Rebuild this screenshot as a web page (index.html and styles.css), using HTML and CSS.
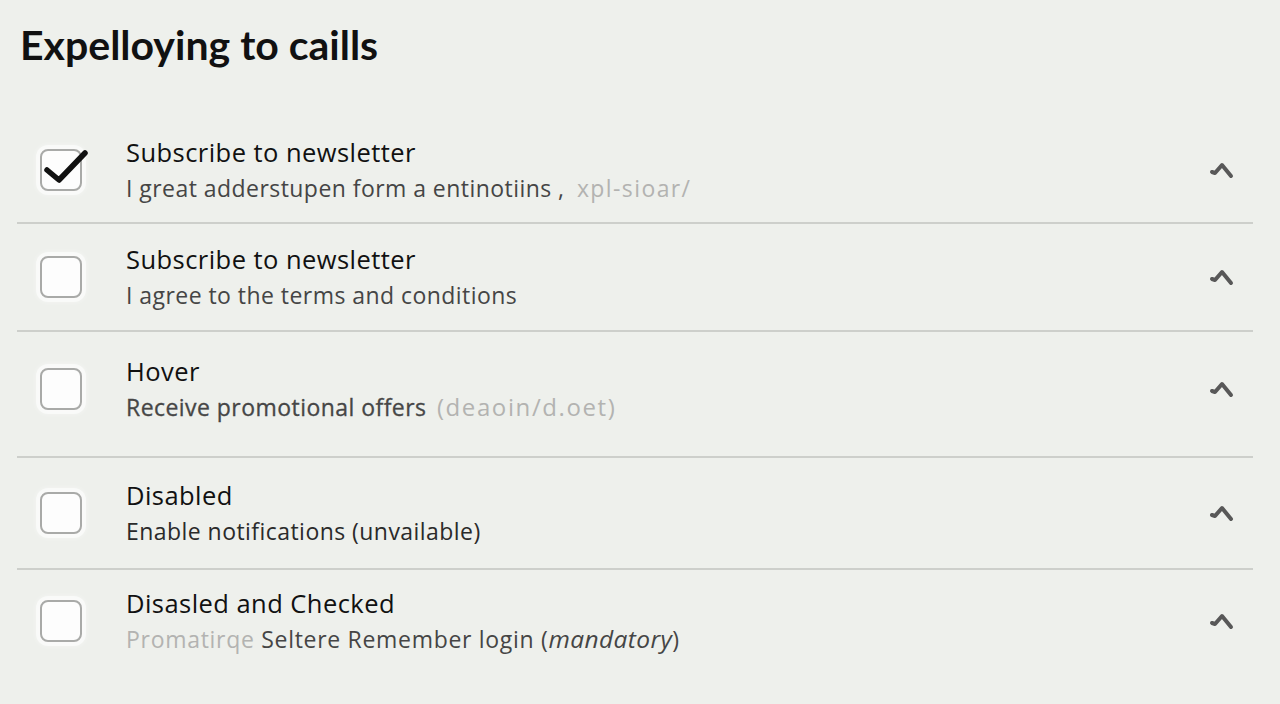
FILE: index.html
```html
<!DOCTYPE html>
<html lang="en">
<head>
<meta charset="utf-8">
<title>Checkbox list</title>
<link rel="stylesheet" href="styles.css">
</head>
<body>
<main class="page">
  <h1 class="heading">Expelloying to caills</h1>
  <ul class="list">
    <li class="row row-1">
      <span class="box">
        <svg class="check" width="52" height="36" viewBox="0 0 52 36"><polyline points="7,21 19,31 45,4" fill="none" stroke="#111" stroke-width="5.5" stroke-linecap="round" stroke-linejoin="round"/></svg>
      </span>
      <div class="text">
        <div class="title">Subscribe to newsletter</div>
        <div class="sub">I great adderstupen form a entinotiins , <span class="ghost ghost-spaced">xpl-sioar/</span></div>
      </div>
      <svg class="chev" width="26" height="18" viewBox="0 0 26 18"><polyline points="3,10 6,11 13,3 22,14" fill="none" stroke="#585858" stroke-width="4" stroke-linecap="round" stroke-linejoin="round"/></svg>
    </li>
    <li class="row row-2">
      <span class="box"></span>
      <div class="text">
        <div class="title">Subscribe to newsletter</div>
        <div class="sub">I agree to the terms and conditions</div>
      </div>
      <svg class="chev" width="26" height="18" viewBox="0 0 26 18"><polyline points="3,10 6,11 13,3 22,14" fill="none" stroke="#585858" stroke-width="4" stroke-linecap="round" stroke-linejoin="round"/></svg>
    </li>
    <li class="row row-3">
      <span class="box"></span>
      <div class="text">
        <div class="title">Hover</div>
        <div class="sub sub-strong">Receive promotional offers <span class="ghost ghost-wide">(deaoin/d.oet)</span></div>
      </div>
      <svg class="chev" width="26" height="18" viewBox="0 0 26 18"><polyline points="3,10 6,11 13,3 22,14" fill="none" stroke="#585858" stroke-width="4" stroke-linecap="round" stroke-linejoin="round"/></svg>
    </li>
    <li class="row row-4">
      <span class="box"></span>
      <div class="text">
        <div class="title">Disabled</div>
        <div class="sub sub-dark">Enable notifications (unvailable)</div>
      </div>
      <svg class="chev" width="26" height="18" viewBox="0 0 26 18"><polyline points="3,10 6,11 13,3 22,14" fill="none" stroke="#585858" stroke-width="4" stroke-linecap="round" stroke-linejoin="round"/></svg>
    </li>
    <li class="row row-5">
      <span class="box"></span>
      <div class="text">
        <div class="title">Disasled and Checked</div>
        <div class="sub sub-wide"><span class="ghost">Promatirqe</span> Seltere Remember login (<em>mandatory</em>)</div>
      </div>
      <svg class="chev" width="26" height="18" viewBox="0 0 26 18"><polyline points="3,10 6,11 13,3 22,14" fill="none" stroke="#585858" stroke-width="4" stroke-linecap="round" stroke-linejoin="round"/></svg>
    </li>
  </ul>
</main>
</body>
</html>
```
FILE: styles.css
```css
html, body {
  margin: 0;
  padding: 0;
  background: #eef0ec;
}

body {
  font-family: "Open Sans", "Noto Sans", sans-serif;
  color: #141414;
  width: 1280px;
  height: 704px;
  overflow: hidden;
}

.page {
  padding: 21px 27px 0 17px;
}

.heading {
  margin: 0 0 0 3px;
  font-family: Lato, "Noto Sans", sans-serif;
  font-size: 41px;
  line-height: 48px;
  font-weight: 700;
  color: #111;
}

.list {
  list-style: none;
  margin: 49px 0 0 0;
  padding: 0;
}

.row {
  display: flex;
  align-items: center;
  border-bottom: 2px solid #cdcfcb;
  box-sizing: border-box;
  padding-left: 23px;
  padding-right: 18px;
}

.row-1 { height: 106px; }
.row-2 { height: 108px; }
.row-3 { height: 126px; padding-bottom: 10px; }
.row-4 { height: 112px; }
.row-5 { height: 106px; border-bottom: none; padding-bottom: 4px; }

.box {
  position: relative;
  flex: none;
  width: 42px;
  height: 42px;
  box-sizing: border-box;
  border: 2px solid #a9aaa8;
  border-radius: 8px;
  background: #fdfdfd;
  box-shadow: 0 0 0 4px rgba(255, 255, 255, 0.55), 0 0 4px 5px rgba(255, 255, 255, 0.3);
}

.check {
  position: absolute;
  left: -2px;
  top: -2px;
  overflow: visible;
}

.text {
  flex: 1;
  margin-left: 44px;
}

.title {
  font-size: 25.5px;
  line-height: 36px;
  letter-spacing: 0.45px;
  color: #111;
}

.sub {
  font-size: 23px;
  line-height: 36px;
  letter-spacing: 0.45px;
  color: #454545;
}

.sub-strong {
  color: #464646;
  -webkit-text-stroke: 0.3px #464646;
}

.sub-dark {
  color: #2a2a2a;
}

.sub-wide {
  letter-spacing: 0.7px;
}

.ghost {
  color: #b3b3b1;
  -webkit-text-stroke: 0;
}

.ghost-spaced {
  letter-spacing: 1.4px;
  margin-left: 6px;
}

.ghost-wide {
  font-size: 24px;
  letter-spacing: 1.6px;
  margin-left: 4px;
}

.sub em {
  font-style: italic;
  font-size: 24.5px;
  letter-spacing: 0.4px;
}

.chev {
  flex: none;
  margin-top: 2px;
}
```
